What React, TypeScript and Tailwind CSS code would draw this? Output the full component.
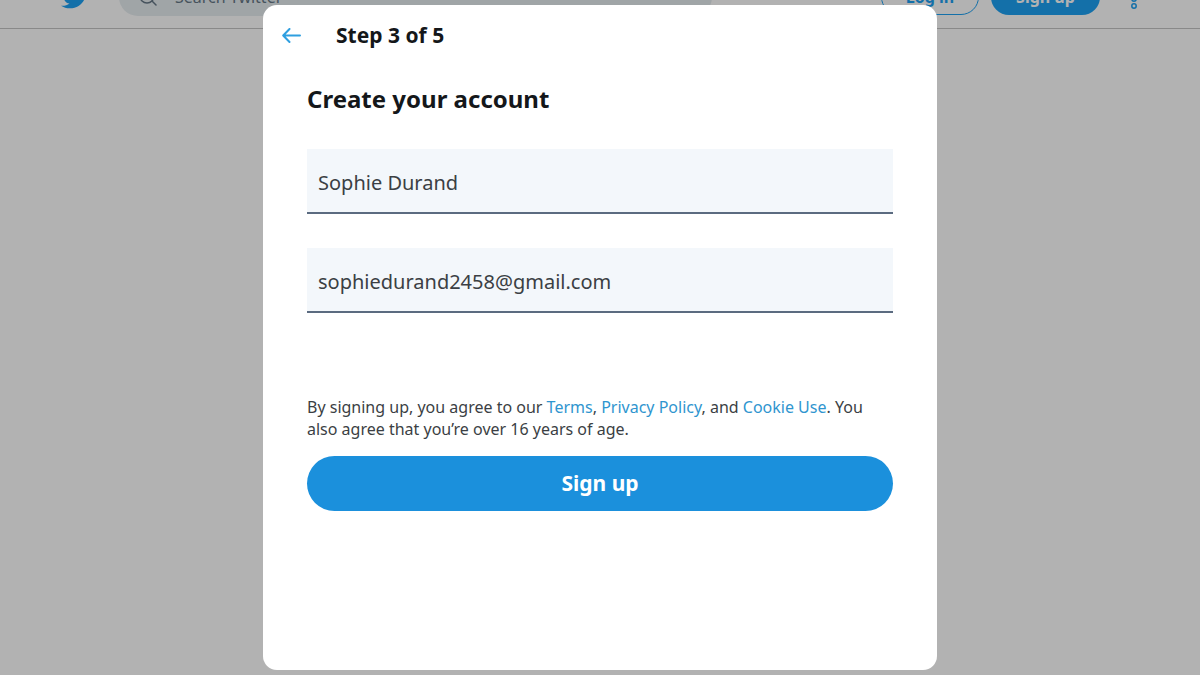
import { FaTwitter } from "react-icons/fa";

function Arrow() {
  return (
    <svg
      viewBox="0 0 20 16"
      className="h-4 w-5"
      fill="none"
      stroke="currentColor"
      strokeWidth="2"
      strokeLinecap="round"
      strokeLinejoin="round"
    >
      <path d="M18 7.5H2M7.5 1 1.2 7.5l6.3 6.5" />
    </svg>
  );
}

function SearchIcon() {
  return (
    <svg
      viewBox="0 0 20 20"
      className="size-5 shrink-0"
      fill="none"
      stroke="currentColor"
      strokeWidth="1.5"
      strokeLinecap="round"
    >
      <circle cx="8" cy="9" r="7" />
      <path d="m13 14 4 4" />
    </svg>
  );
}

function MoreIcon() {
  return (
    <svg
      viewBox="0 0 24 24"
      className="size-6"
      fill="none"
      stroke="currentColor"
      strokeWidth="1.5"
    >
      <circle cx="12" cy="7" r="2.2" />
      <circle cx="12" cy="14" r="2.2" />
      <circle cx="12" cy="21" r="2.2" />
    </svg>
  );
}

function TopBar() {
  return (
    <header className="-mt-[34px] flex h-[63px] items-center border-b border-[#c4c4c4] pr-[54px] pl-[61px]">
      <a href="#" aria-label="Twitter" className="text-[#1da1f2]">
        <FaTwitter size={28} />
      </a>
      <label className="ml-[30px] flex h-[38px] max-w-[593px] flex-1 items-center gap-4 rounded-full bg-[#e6ecf0] px-5 text-[#657786]">
        <SearchIcon />
        <input
          type="search"
          aria-label="Search Twitter"
          placeholder="Search Twitter"
          className="min-w-0 flex-1 bg-transparent text-base outline-none placeholder:text-[#657786]"
        />
      </label>
      <div className="ml-auto flex items-center gap-3">
        <button className="h-9 w-[98px] rounded-full border border-[#1da1f2] text-base font-bold text-[#1da1f2]">
          Log in
        </button>
        <button className="h-9 w-[109px] rounded-full bg-[#1da1f2] text-base font-bold text-white">
          Sign up
        </button>
        <button aria-label="More" className="ml-[10px] text-[#1da1f2]">
          <MoreIcon />
        </button>
      </div>
    </header>
  );
}

interface FieldProps {
  label: string;
  type: string;
  value: string;
}

function Field({ label, type, value }: FieldProps) {
  return (
    <input
      type={type}
      aria-label={label}
      defaultValue={value}
      className="block h-[65px] w-full border-b-2 border-[#5b6b80] bg-[#f3f7fb] px-[11px] pt-[3px] text-xl text-[#3b3f44] outline-none"
    />
  );
}

function SignUpDialog() {
  return (
    <div
      role="dialog"
      aria-labelledby="dialog-title"
      className="w-full max-w-[674px] rounded-[14px] bg-white px-11"
    >
      <div className="-ml-[25px] flex h-[62px] items-center gap-[34px]">
        <button aria-label="Back" className="text-[#2f9fe0]">
          <Arrow />
        </button>
        <h2 className="text-[21px] font-bold text-[#14171a]">Step 3 of 5</h2>
      </div>

      <h1 id="dialog-title" className="mt-4 text-2xl leading-8 font-bold text-[#14171a]">
        Create your account
      </h1>

      <form onSubmit={(e) => e.preventDefault()}>
        <div className="mt-[34px] flex flex-col gap-[34px]">
          <Field label="Name" type="text" value="Sophie Durand" />
          <Field label="Email" type="email" value="sophiedurand2458@gmail.com" />
        </div>

        <p className="mt-[83px] text-base leading-[22px] text-[#3b3f44]">
          By signing up, you agree to our{" "}
          <a href="#" className="text-[#2f95cf]">Terms</a>,{" "}
          <a href="#" className="text-[#2f95cf]">Privacy Policy</a>, and{" "}
          <a href="#" className="text-[#2f95cf]">Cookie Use</a>. You also agree
          that you’re over 16 years of age.
        </p>

        <button
          type="submit"
          className="mt-4 h-[55px] w-full rounded-full bg-[#1b90dc] text-[21px] font-bold text-white"
        >
          Sign up
        </button>
      </form>
    </div>
  );
}

export default function App() {
  return (
    <div className="h-screen overflow-hidden bg-white font-['Noto_Sans',sans-serif]">
      <TopBar />
      <div className="fixed inset-0 flex justify-center bg-black/30 py-[5px]">
        <SignUpDialog />
      </div>
    </div>
  );
}
